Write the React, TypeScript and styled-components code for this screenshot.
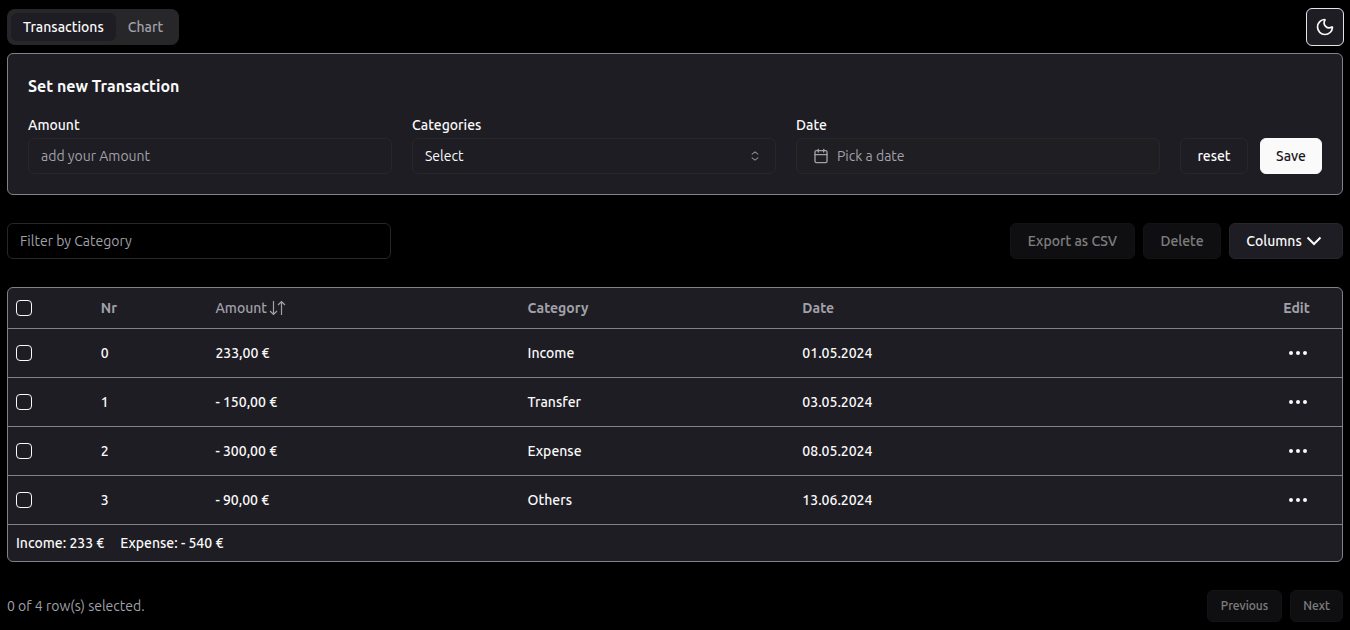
import React, { useState } from 'react';
import styled, { createGlobalStyle, css } from 'styled-components';
import { Calendar, Moon } from 'lucide-react';

const Global = createGlobalStyle`
  *, *::before, *::after { box-sizing: border-box; }
  body {
    margin: 0;
    background: #000;
    color: #fafafa;
    font-family: Ubuntu, "Noto Sans", sans-serif;
    font-size: 14px;
    line-height: 20px;
  }
  button, input, select { font: inherit; color: inherit; margin: 0; }
`;

const Page = styled.main`
  padding: 8px 7px;
`;

const Header = styled.header`
  display: flex;
  align-items: center;
  justify-content: space-between;
  margin: 0 -1px 7px 0;
`;

const Tabs = styled.div`
  display: flex;
  height: 36px;
  padding: 4px;
  border-radius: 8px;
  background: #27272a;
`;

const Tab = styled.button<{ $active: boolean }>`
  padding: 0 12px;
  border: 0;
  border-radius: 6px;
  font-weight: 500;
  background: ${(p) => (p.$active ? '#1e1d23' : 'transparent')};
  color: ${(p) => (p.$active ? '#fafafa' : '#a1a1aa')};
`;

const ThemeToggle = styled.button`
  display: grid;
  place-items: center;
  width: 38px;
  height: 38px;
  padding: 0;
  border: 1px solid #e4e4e7;
  border-radius: 6px;
  background: #1e1d23;
`;

const panel = css`
  border: 1px solid #82818a;
  border-radius: 6px;
  background: #1e1d23;
`;

const FormPanel = styled.form`
  ${panel}
  padding: 20px;
`;

const Title = styled.h1`
  margin: 0 0 20px;
  font-size: 16px;
  line-height: 24px;
  font-weight: 700;
`;

const FormRow = styled.div`
  display: flex;
  align-items: flex-end;
  gap: 20px;
`;

const Field = styled.div`
  flex: 1;
  min-width: 0;
  display: flex;
  flex-direction: column;
  gap: 6px;
`;

const Label = styled.label`
  font-weight: 500;
  line-height: 14px;
`;

const control = css`
  width: 100%;
  height: 36px;
  padding: 0 12px;
  border: 1px solid #27272a;
  border-radius: 6px;
  background: transparent;
`;

const TextInput = styled.input`
  ${control}
  &::placeholder { color: #a1a1aa; opacity: 1; }
`;

const SelectWrap = styled.div`
  position: relative;
  svg {
    position: absolute;
    right: 13px;
    top: 10px;
    pointer-events: none;
    opacity: 0.5;
  }
`;

const Select = styled.select`
  ${control}
  appearance: none;
  option { background: #1e1d23; }
`;

const DateButton = styled.button`
  ${control}
  display: flex;
  align-items: center;
  gap: 8px;
  padding: 0 16px;
  color: #a1a1aa;
  background: #1f1e23;
`;

const Actions = styled.div`
  display: flex;
  gap: 12px;
`;

const Button = styled.button<{ $primary?: boolean; $small?: boolean; $width: number }>`
  display: inline-flex;
  align-items: center;
  justify-content: center;
  gap: 4px;
  min-width: ${(p) => p.$width}px;
  height: ${(p) => (p.$small ? 32 : 36)}px;
  padding: 0 8px;
  border: 1px solid ${(p) => (p.$primary ? '#fafafa' : '#27272a')};
  border-radius: 6px;
  background: ${(p) => (p.$primary ? '#fafafa' : '#1e1d23')};
  color: ${(p) => (p.$primary ? '#18181b' : '#fafafa')};
  font-size: ${(p) => (p.$small ? 12 : 14)}px;
  font-weight: 500;
  white-space: nowrap;
  &:disabled { opacity: 0.5; }
`;

const Toolbar = styled.div`
  display: flex;
  justify-content: space-between;
  gap: 20px;
  margin: 28px 0;
`;

const Filter = styled(TextInput)`
  max-width: 384px;
`;

const ButtonGroup = styled.div`
  display: flex;
  gap: 8px;
`;

const TablePanel = styled.section`
  ${panel}
  overflow: hidden;
`;

const Table = styled.table`
  width: 100%;
  table-layout: fixed;
  border-spacing: 0;
`;

const Col = styled.col<{ $share?: number }>`
  width: ${(p) => (p.$share ? `${p.$share}%` : 'auto')};
`;

const HeadCell = styled.th`
  height: 41px;
  padding: 0 8px;
  border-bottom: 1px solid #82818a;
  color: #a1a1aa;
  font-weight: 600;
  text-align: left;
`;

const Cell = styled.td`
  height: 49px;
  padding: 0 8px;
  border-bottom: 1px solid #82818a;
  font-weight: 500;
`;

const Checkbox = styled.input`
  appearance: none;
  display: block;
  width: 16px;
  height: 16px;
  border: 1px solid #fafafa;
  border-radius: 4px;
  &:checked { background: #fafafa; box-shadow: inset 0 0 0 3px #1e1d23; }
`;

const SortButton = styled.button`
  display: flex;
  align-items: center;
  gap: 2px;
  padding: 0;
  border: 0;
  background: none;
  font-weight: 500;
`;

const EditButton = styled.button`
  display: grid;
  place-items: center;
  width: 30px;
  height: 32px;
  padding: 0;
  border: 0;
  background: none;
`;

const Summary = styled.div`
  display: flex;
  align-items: center;
  gap: 16px;
  height: 36px;
  padding: 0 8px;
  font-weight: 500;
`;

const Footer = styled.footer`
  display: flex;
  align-items: center;
  justify-content: space-between;
  margin-top: 28px;
  color: #a1a1aa;
`;

const CaretSortIcon = () => (
  <svg width="16" height="16" viewBox="0 0 15 15" fill="none" stroke="currentColor" strokeLinecap="round" strokeLinejoin="round" aria-hidden="true">
    <path d="M4.800 5.700 7.500 3.600l2.700 2.100M4.800 9.300l2.700 2.100 2.700-2.100" />
  </svg>
);

const ChevronIcon = () => (
  <svg width="20" height="16" viewBox="0 0 20 16" fill="none" stroke="currentColor" strokeWidth="2" aria-hidden="true">
    <path d="m1.500 4.500 6.500 6.500 6.500-6.500" />
  </svg>
);

const SortIcon = () => (
  <svg width="17" height="16" viewBox="0 0 17 16" fill="none" stroke="currentColor" strokeWidth="1.200" aria-hidden="true">
    <path d="M4.500 1v13.500M1 11l3.500 3.500L8 11M12.500 15V1.500M9 5l3.500-3.500L16 5" />
  </svg>
);

const DotsIcon = () => (
  <svg width="20" height="6" viewBox="0 0 20 6" fill="currentColor" aria-hidden="true">
    <circle cx="3" cy="3" r="2" />
    <circle cx="10" cy="3" r="2" />
    <circle cx="17" cy="3" r="2" />
  </svg>
);

const rows = [
  { amount: '233,00 €', category: 'Income', date: '01.05.2024' },
  { amount: '- 150,00 €', category: 'Transfer', date: '03.05.2024' },
  { amount: '- 300,00 €', category: 'Expense', date: '08.05.2024' },
  { amount: '- 90,00 €', category: 'Others', date: '13.06.2024' },
];

export default function App() {
  const [tab, setTab] = useState('Transactions');
  const [selected, setSelected] = useState<number[]>([]);
  const toggle = (i: number) =>
    setSelected((s) => (s.includes(i) ? s.filter((n) => n !== i) : [...s, i]));

  return (
    <Page>
      <Global />
      <Header>
        <Tabs role="tablist">
          {['Transactions', 'Chart'].map((name) => (
            <Tab key={name} type="button" role="tab" aria-selected={tab === name} $active={tab === name} onClick={() => setTab(name)}>
              {name}
            </Tab>
          ))}
        </Tabs>
        <ThemeToggle type="button" aria-label="Toggle theme"><Moon size={20} /></ThemeToggle>
      </Header>

      <FormPanel onSubmit={(e) => e.preventDefault()}>
        <Title>Set new Transaction</Title>
        <FormRow>
          <Field>
            <Label htmlFor="amount">Amount</Label>
            <TextInput id="amount" placeholder="add your Amount" />
          </Field>
          <Field>
            <Label htmlFor="category">Categories</Label>
            <SelectWrap>
              <Select id="category" defaultValue="">
                <option value="">Select</option>
                {rows.map((r) => <option key={r.category}>{r.category}</option>)}
              </Select>
              <CaretSortIcon />
            </SelectWrap>
          </Field>
          <Field>
            <Label htmlFor="date">Date</Label>
            <DateButton id="date" type="button"><Calendar size={16} />Pick a date</DateButton>
          </Field>
          <Actions>
            <Button type="reset" $width={68}>reset</Button>
            <Button type="submit" $primary $width={62}>Save</Button>
          </Actions>
        </FormRow>
      </FormPanel>

      <Toolbar>
        <Filter aria-label="Filter by Category" placeholder="Filter by Category" />
        <ButtonGroup>
          <Button type="button" disabled={!selected.length} $width={125}>Export as CSV</Button>
          <Button type="button" disabled={!selected.length} $width={78}>Delete</Button>
          <Button type="button" $width={114}>Columns<ChevronIcon /></Button>
        </ButtonGroup>
      </Toolbar>

      <TablePanel>
        <Table>
          <colgroup>
            <Col $share={6.35} />
            <Col $share={8.6} />
            <Col $share={23.4} />
            <Col $share={20.6} />
            <Col />
            <Col $share={5} />
          </colgroup>
          <thead>
            <tr>
              <HeadCell>
                <Checkbox
                  type="checkbox"
                  aria-label="Select all"
                  checked={selected.length === rows.length}
                  onChange={(e) => setSelected(e.target.checked ? rows.map((_, i) => i) : [])}
                />
              </HeadCell>
              <HeadCell>Nr</HeadCell>
              <HeadCell><SortButton type="button">Amount<SortIcon /></SortButton></HeadCell>
              <HeadCell>Category</HeadCell>
              <HeadCell>Date</HeadCell>
              <HeadCell>Edit</HeadCell>
            </tr>
          </thead>
          <tbody>
            {rows.map((r, i) => (
              <tr key={r.date}>
                <Cell>
                  <Checkbox type="checkbox" aria-label={`Select row ${i}`} checked={selected.includes(i)} onChange={() => toggle(i)} />
                </Cell>
                <Cell>{i}</Cell>
                <Cell>{r.amount}</Cell>
                <Cell>{r.category}</Cell>
                <Cell>{r.date}</Cell>
                <Cell><EditButton type="button" aria-label={`Edit row ${i}`}><DotsIcon /></EditButton></Cell>
              </tr>
            ))}
          </tbody>
        </Table>
        <Summary>
          <span>Income: 233 €</span>
          <span>Expense: - 540 €</span>
        </Summary>
      </TablePanel>

      <Footer>
        <span>{selected.length} of {rows.length} row(s) selected.</span>
        <ButtonGroup>
          <Button type="button" disabled $small $width={75}>Previous</Button>
          <Button type="button" disabled $small $width={53}>Next</Button>
        </ButtonGroup>
      </Footer>
    </Page>
  );
}
